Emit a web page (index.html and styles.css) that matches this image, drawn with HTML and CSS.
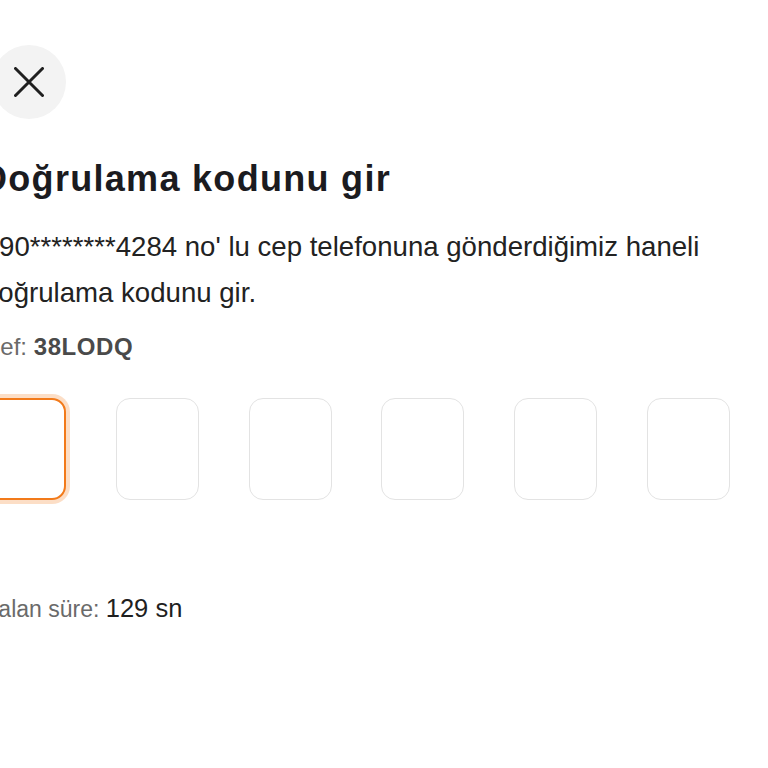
FILE: index.html
```html
<!DOCTYPE html>
<html lang="tr">
<head>
<meta charset="utf-8">
<title>Doğrulama kodunu gir</title>
<link rel="stylesheet" href="styles.css">
</head>
<body>
<div class="sheet">
  <button class="close" aria-label="Kapat">
    <svg width="30" height="30" viewBox="0 0 30 30" aria-hidden="true">
      <path d="M1.5 1.5 L28.5 28.5 M28.5 1.5 L1.5 28.5" stroke="#1f1f1f" stroke-width="3" stroke-linecap="round" fill="none"/>
    </svg>
  </button>
  <h1 class="title">Doğrulama kodunu gir</h1>
  <p class="desc">+90********4284 no' lu cep telefonuna gönderdiğimiz haneli doğrulama kodunu gir.</p>
  <p class="ref">Ref: <b>38LODQ</b></p>
  <div class="otp">
    <div class="cell active"></div>
    <div class="cell"></div>
    <div class="cell"></div>
    <div class="cell"></div>
    <div class="cell"></div>
    <div class="cell"></div>
  </div>
  <p class="timer">Kalan süre: <span>129 sn</span></p>
</div>
</body>
</html>
```

FILE: styles.css
```css
html, body {
  margin: 0;
  padding: 0;
  background: #ffffff;
}
body {
  font-family: "Liberation Sans", Arial, sans-serif;
  color: #222222;
  overflow: hidden;
}
.sheet {
  margin-left: -17px;
  padding-top: 45px;
  width: 750px;
}
.close {
  display: flex;
  align-items: center;
  justify-content: center;
  width: 74px;
  height: 74px;
  margin-left: 9px;
  padding: 0;
  border: none;
  border-radius: 50%;
  background: #f3f3f3;
}
.title {
  margin: 38px 0 0 -2px;
  font-size: 36px;
  line-height: 44px;
  font-weight: 700;
  letter-spacing: 1.3px;
  color: #1b1b1f;
}
.desc {
  margin: 23px 0 0;
  font-size: 27.6px;
  line-height: 46px;
  color: #222222;
}
.ref {
  margin: 16px 0 0;
  font-size: 24px;
  line-height: 30px;
  color: #6a6a6a;
}
.ref b {
  color: #4a4a4a;
  font-weight: 700;
  letter-spacing: 0.6px;
}
.otp {
  display: flex;
  gap: 49.75px;
  margin-top: 36px;
}
.cell {
  box-sizing: border-box;
  width: 83px;
  height: 102px;
  border: 1.5px solid #e3e3e3;
  border-radius: 14px;
  background: #ffffff;
}
.cell.active {
  border: 2px solid #f27a1a;
  box-shadow: 0 0 0 4px rgba(242, 122, 26, 0.25);
}
.timer {
  margin: 90px 0 0;
  font-size: 23px;
  line-height: 36px;
  color: #6a6a6a;
}
.timer span {
  font-size: 25.5px;
  color: #1f1f1f;
}
```
